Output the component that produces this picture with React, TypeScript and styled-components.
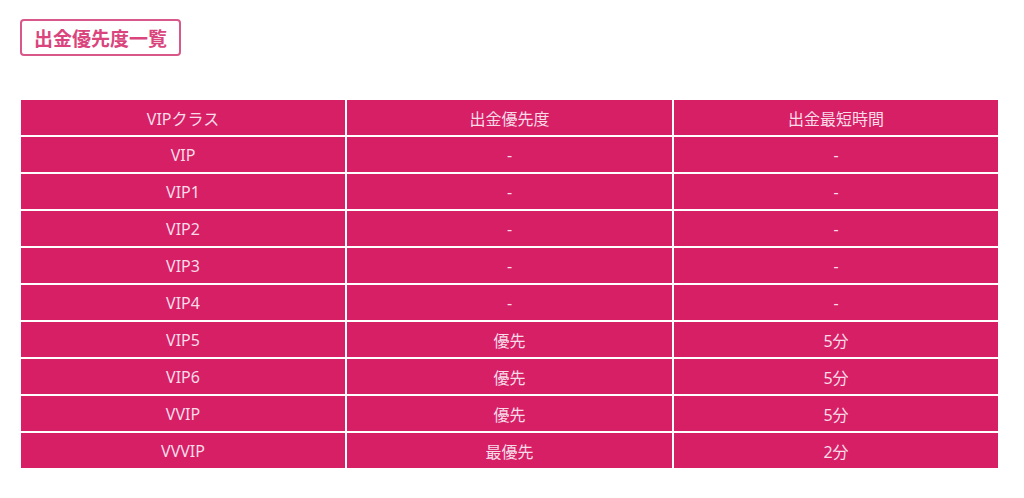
import React from 'react';
import styled, { createGlobalStyle } from 'styled-components';

const GlobalStyle = createGlobalStyle`
  body {
    margin: 0;
    background: #ffffff;
    font-family: "Noto Sans", "Noto Sans CJK JP", sans-serif;
  }
`;

const Page = styled.div`
  padding: 19px 26px 0 21px;
`;

const Title = styled.h2`
  display: inline-block;
  margin: 0 0 44px -1px;
  padding: 0 12px;
  height: 33px;
  line-height: 33px;
  border: 2px solid #d9588a;
  border-radius: 4px;
  color: #d9457c;
  font-family: "Noto Sans CJK JP", sans-serif;
  font-size: 19px;
  font-weight: 700;
`;

const Grid = styled.div`
  display: grid;
  grid-template-columns: 324px 325px 324px;
  grid-auto-rows: 35px;
  gap: 2px;
  width: 977px;
`;

const Cell = styled.div`
  display: flex;
  align-items: center;
  justify-content: center;
  background: #d71f66;
  color: #f7dce8;
  font-size: 16px;
`;

const rows = [
  ['VIPクラス', '出金優先度', '出金最短時間'],
  ['VIP', '-', '-'],
  ['VIP1', '-', '-'],
  ['VIP2', '-', '-'],
  ['VIP3', '-', '-'],
  ['VIP4', '-', '-'],
  ['VIP5', '優先', '5分'],
  ['VIP6', '優先', '5分'],
  ['VVIP', '優先', '5分'],
  ['VVVIP', '最優先', '2分'],
];

const App: React.FC = () => (
  <>
    <GlobalStyle />
    <Page>
      <Title>出金優先度一覧</Title>
      <Grid>
        {rows.map((row, i) =>
          row.map((text, j) => <Cell key={`${i}-${j}`}>{text}</Cell>)
        )}
      </Grid>
    </Page>
  </>
);

export default App;
